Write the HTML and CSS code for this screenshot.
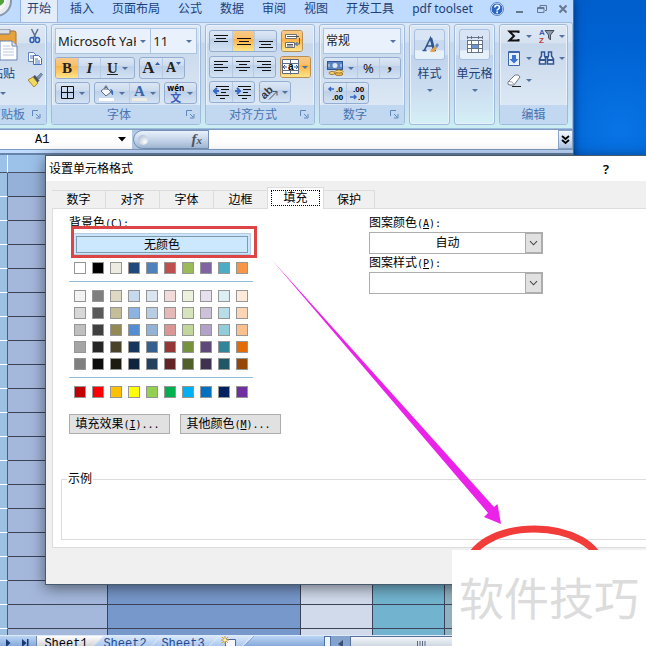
FILE: index.html
```html
<!DOCTYPE html>
<html lang="zh-CN">
<head>
<meta charset="utf-8">
<title>设置单元格格式</title>
<link rel="stylesheet" href="styles.css">
</head>
<body>
<main class="desktop">
  <section class="excel">
    <nav class="tabs">
      <svg class="orb" width="16" height="22" viewBox="0 0 16 22"><circle cx="-4" cy="1" r="15" fill="#e6ebf2" stroke="#8a97ab" stroke-width="2"/><circle cx="-4" cy="1" r="10" fill="#f7faf2"/><path d="M-4-2h8v4q-2 4-8 5z" fill="#4ea43a"/></svg>
      <a class="tab active" href="#home">开始</a>
      <a class="tab" href="#insert">插入</a>
      <a class="tab" href="#layout">页面布局</a>
      <a class="tab" href="#formula">公式</a>
      <a class="tab" href="#data">数据</a>
      <a class="tab" href="#review">审阅</a>
      <a class="tab" href="#view">视图</a>
      <a class="tab" href="#dev">开发工具</a>
      <a class="tab" href="#pdf">pdf toolset</a>
      <div class="winctl">
        <button aria-label="帮助"><svg width="14" height="14" viewBox="0 0 14 14"><circle cx="7" cy="7" r="6" fill="#2c66c4" stroke="#eaf3ff"/><circle cx="7" cy="7" r="6.500" fill="none" stroke="#5b83bd"/><path d="M4.800 5.500q0-2.300 2.300-2.300t2.300 2q0 1.200-1.200 1.900t-1.100 1.500" fill="none" stroke="#fff" stroke-width="1.600"/><path d="M6.300 9.600h1.700v1.600h-1.700z" fill="#fff"/></svg></button>
        <button aria-label="最小化"><svg width="10" height="10" viewBox="0 0 10 10"><path d="M1 8h7" stroke="#66788f" stroke-width="2"/></svg></button>
        <button aria-label="还原"><svg width="10" height="10" viewBox="0 0 10 10"><path d="M3 3V1.500h6.500v5H8M.500 3.500h6.500v5H.500zM.500 4.500h6.500" fill="none" stroke="#66788f"/></svg></button>
        <button aria-label="关闭"><svg width="10" height="10" viewBox="0 0 10 10"><path d="M1.500 1.500l7 7M8.500 1.500l-7 7" stroke="#66788f" stroke-width="2"/></svg></button>
      </div>
    </nav>

    <div class="ribbon">
      <section class="group clipboard">
        <div class="body cols">
          <button class="paste">
            <svg width="32" height="32" viewBox="0 0 32 32"><rect x="2" y="2" width="27" height="25" rx="2" fill="#e9a13c" stroke="#a8752a"/><rect x="8" y="0" width="15" height="5" rx="1" fill="#d9dde4" stroke="#6b7687"/><path d="M13 12h12l5 5v14H13z" fill="#fff" stroke="#6a83ad"/><path d="M16 17h7M16 20h11M16 23h11M16 26h11" stroke="#b4c6de"/><path d="M25 12v5h5" fill="#dce7f5" stroke="#6a83ad"/></svg>
            <span>粘贴</span><i class="arr"></i>
          </button>
          <div class="stack">
            <button aria-label="剪切"><svg width="16" height="16" viewBox="0 0 16 16"><path d="M4.500 1l4.500 9M11 1L6.500 10" stroke="#5a6e8c" stroke-width="1.500"/><ellipse cx="5" cy="12" rx="2" ry="2.500" fill="none" stroke="#2f5fb0" stroke-width="1.500"/><ellipse cx="10.500" cy="12" rx="2" ry="2.500" fill="none" stroke="#2f5fb0" stroke-width="1.500"/></svg></button>
            <button aria-label="复制"><svg width="16" height="16" viewBox="0 0 16 16"><path d="M1.500 2.500h5l3 3v6h-8z" fill="#fff" stroke="#5a86c8"/><path d="M3 6h4M3 8h4" stroke="#4a78bd"/><path d="M6.500 5.500h5l3 3v6h-8z" fill="#fff" stroke="#3f70ba"/><path d="M8 9h3M8 11h5M8 13h5" stroke="#4a78bd"/></svg></button>
            <button aria-label="格式刷"><svg width="16" height="16" viewBox="0 0 16 16"><path d="M1 8l5-3 5 6-4 4z" fill="#f0d861" stroke="#a58b2d"/><path d="M6 4.500l2-1.500 4.500 5.500-2 2z" fill="#4c5364"/><path d="M10 5l4-4 1.500 1.500L12 7z" fill="#7e93b5" stroke="#51617c" stroke-width=".6"/></svg></button>
          </div>
        </div>
        <footer><span>剪贴板</span><button class="launch" aria-label="剪贴板选项"><svg width="9" height="9" viewBox="0 0 9 9"><path d="M.500 6V.500H6M4 4l3 3M8 4v4H4" fill="none" stroke="#5f86b8"/></svg></button></footer>
      </section>

      <section class="group font">
        <div class="body">
          <div class="fields"><button class="combo face"><span>Microsoft YaHei</span><i class="arr"></i></button><button class="combo size"><span>11</span><i class="arr"></i></button></div>
          <div class="row">
            <div class="set"><button class="on w22 serif"><b>B</b></button><button class="w22 serif"><em>I</em></button><button class="w34 serif"><u>U</u><i class="arr"></i></button></div>
            <div class="set"><button class="w22 serif big">A<svg width="5" height="12" viewBox="0 0 5 12"><path d="M0 3l2.500-3L5 3z" fill="#315fa6"/></svg></button><button class="w22 serif small">A<svg width="5" height="12" viewBox="0 0 5 12"><path d="M0 0h5L2.500 3z" fill="#315fa6"/></svg></button></div>
          </div>
          <div class="row between">
            <div class="set"><button class="w34" aria-label="边框"><svg width="14" height="14" viewBox="0 0 14 14"><path d="M.500.500h12v12H.500zM6.500.500v12M.500 6.500h12" fill="none" stroke="#111"/></svg><i class="arr"></i></button></div>
            <div class="set"><button class="w34" aria-label="填充颜色"><svg width="16" height="16" viewBox="0 0 16 16"><path d="M2 6l5-4 5 5-5 4z" fill="#f5f7fa" stroke="#59677d"/><path d="M6 5V1.500q1-1.500 2 0V5" fill="none" stroke="#59677d"/><path d="M11 4q4 0 3 6-2 0-2-4z" fill="#336cc0"/><path d="M0 13h15v3H0z" fill="#fff"/></svg><i class="arr"></i></button><button class="w30 serif fontcolor"><svg width="15" height="16" viewBox="0 0 15 16"><text x="2" y="11" font-size="15" font-weight="700" font-family="Liberation Serif" fill="#3965a8">A</text><path d="M0 13h15v3H0z" fill="#eeece1"/></svg><i class="arr"></i></button></div>
            <div class="set"><button class="w32" aria-label="拼音"><span class="wen"><span>wén</span><span>文</span></span><i class="arr"></i></button></div>
          </div>
        </div>
        <footer><span>字体</span><button class="launch" aria-label="字体选项"><svg width="9" height="9" viewBox="0 0 9 9"><path d="M.500 6V.500H6M4 4l3 3M8 4v4H4" fill="none" stroke="#5f86b8"/></svg></button></footer>
      </section>

      <section class="group align">
        <div class="body">
          <div class="row first">
            <div class="set"><button class="w22" aria-label="顶端对齐"><svg width="16" height="16" viewBox="0 0 16 16"><path d="M1 2.500h14M3 5.500h10M1 8.500h14" stroke="#111"/></svg></button><button class="on w22" aria-label="垂直居中"><svg width="16" height="16" viewBox="0 0 16 16"><path d="M1 5.500h14M3 8.500h10M1 11.500h14" stroke="#111"/></svg></button><button class="w22" aria-label="底端对齐"><svg width="16" height="16" viewBox="0 0 16 16"><path d="M1 8.500h14M3 11.500h10M1 14.500h14" stroke="#111"/></svg></button></div>
            <div class="set lit"><button class="on w20" aria-label="自动换行"><svg width="17" height="17" viewBox="0 0 17 17"><path d="M1.500 1.500h11v4h-11zM1.500 9.500h9v5h-9z" fill="#fff" stroke="#6c7178"/><path d="M3 3.500h12M3 11.500h6M3 13h6" stroke="#555"/><path d="M15.500 5v6h-4m2-2l-2 2 2 2" fill="none" stroke="#315fa6"/></svg></button></div>
          </div>
          <div class="row">
            <div class="set"><button class="w22" aria-label="左对齐"><svg width="16" height="16" viewBox="0 0 16 16"><path d="M1 2.500h14M1 5.500h9M1 8.500h14M1 11.500h9" stroke="#111"/></svg></button><button class="w22" aria-label="居中"><svg width="16" height="16" viewBox="0 0 16 16"><path d="M1 2.500h14M4 5.500h8M1 8.500h14M4 11.500h8" stroke="#111"/></svg></button><button class="w22" aria-label="右对齐"><svg width="16" height="16" viewBox="0 0 16 16"><path d="M1 2.500h14M6 5.500h9M1 8.500h14M6 11.500h9" stroke="#111"/></svg></button></div>
            <div class="set lit"><button class="on w30" aria-label="合并后居中"><svg width="17" height="16" viewBox="0 0 17 16"><path d="M.500.500h16v14H.500zM.500 4.500h16M.500 11.500h16M8.500.500v4M8.500 11.500v4" fill="#fff" stroke="#5c6b80"/><path d="M1 8h4m-2-2L1 8l2 2M16 8h-4m2-2l2 2-2 2" fill="none" stroke="#335b9c"/><text x="6" y="11" font-size="10" font-weight="700" font-family="Liberation Sans">a</text></svg><i class="arr"></i></button></div>
          </div>
          <div class="row">
            <div class="set"><button class="w22" aria-label="减少缩进"><svg width="17" height="16" viewBox="0 0 17 16"><path d="M3 2.500h13M8 5.500h8M8 8.500h5M3 11.500h13M7 14.500h5" stroke="#111"/><path d="M6 7H1m3-3L1 7l3 3" fill="none" stroke="#3968c6" stroke-width="2"/></svg></button><button class="w22" aria-label="增加缩进"><svg width="17" height="16" viewBox="0 0 17 16"><path d="M3 2.500h13M8 5.500h8M8 8.500h5M3 11.500h13M7 14.500h5" stroke="#111"/><path d="M0 7h5M2 4l3 3-3 3" fill="none" stroke="#3968c6" stroke-width="2"/></svg></button></div>
            <div class="set"><button class="w30" aria-label="方向"><svg width="17" height="16" viewBox="0 0 17 16"><text x="-1" y="13" transform="rotate(-45 4 10)" font-size="11" font-weight="700" font-family="Liberation Sans" fill="#333">ab</text><path d="M7 15.500l8-8m-4 0h4v4" fill="none" stroke="#555"/></svg><i class="arr"></i></button></div>
          </div>
        </div>
        <footer><span>对齐方式</span><button class="launch" aria-label="对齐选项"><svg width="9" height="9" viewBox="0 0 9 9"><path d="M.500 6V.500H6M4 4l3 3M8 4v4H4" fill="none" stroke="#5f86b8"/></svg></button></footer>
      </section>

      <section class="group number">
        <div class="body">
          <div class="fields"><button class="combo format"><span>常规</span><i class="arr"></i></button></div>
          <div class="row">
            <div class="set"><button class="w34" aria-label="会计格式"><svg width="17" height="16" viewBox="0 0 17 16"><rect x=".5" y="1.500" width="15" height="8" fill="#5c84c0" stroke="#2e5592"/><circle cx="8" cy="5.500" r="2.500" fill="#dbe7f6"/><path d="M2 4v3M14 4v3" stroke="#dbe7f6"/><ellipse cx="12" cy="14" rx="4" ry="1.500" fill="#f2c14c" stroke="#a9782a"/><ellipse cx="12" cy="11.500" rx="4" ry="1.500" fill="#f8d878" stroke="#a9782a"/><ellipse cx="5" cy="13" rx="3" ry="1.500" fill="#f8d878" stroke="#a9782a"/></svg><i class="arr"></i></button><button class="w22 pct">%</button><button class="w22 serif comma"><b>,</b></button></div>
          </div>
          <div class="row">
            <div class="set"><button class="w22" aria-label="增加小数位"><svg width="17" height="16" viewBox="0 0 17 16"><text x="9" y="7" font-size="8" font-weight="700" font-family="Liberation Sans">.0</text><text x="5" y="15" font-size="8" font-weight="700" font-family="Liberation Sans">.00</text><path d="M7 4H2m2-2L2 4l2 2" fill="none" stroke="#3968c6" stroke-width="1.500"/></svg></button><button class="w22" aria-label="减少小数位"><svg width="17" height="16" viewBox="0 0 17 16"><text x="4" y="7" font-size="8" font-weight="700" font-family="Liberation Sans">.00</text><text x="9" y="15" font-size="8" font-weight="700" font-family="Liberation Sans">.0</text><path d="M1 12h6m-2-2l2 2-2 2" fill="none" stroke="#3968c6" stroke-width="1.500"/></svg></button></div>
          </div>
        </div>
        <footer><span>数字</span><button class="launch" aria-label="数字选项"><svg width="9" height="9" viewBox="0 0 9 9"><path d="M.500 6V.500H6M4 4l3 3M8 4v4H4" fill="none" stroke="#5f86b8"/></svg></button></footer>
      </section>

      <section class="group tall">
        <button class="popup"><span class="tile"><svg width="18" height="18" viewBox="0 0 18 18"><path d="M1.500 14.500h4M3.500 14L9.500 2l3 12M5 10h7M10 14.500h5" fill="none" stroke="#2f568f" stroke-width="1.600"/><path d="M10 2l3 12" stroke="#2f568f" stroke-width="2.500"/><path d="M10 14l4-4 2 2-3 4H9z" fill="#e7a145"/><path d="M14 10l2-3 2 2-2 3z" fill="#6488bf"/></svg></span><span>样式</span><i class="arr"></i></button>
      </section>
      <section class="group tall">
        <button class="popup"><span class="tile"><svg width="18" height="18" viewBox="0 0 18 18"><path d="M1.500 4.500h15v12h-15z" fill="#fff"/><path d="M1.500 4v13M5.500 4v13M12.500 4v13M16.500 4v13M1 4.500h16M1 8.500h16M1 12.500h16M1 16.500h16" stroke="#66748a"/><path d="M6 9h6v3H6z" fill="#6c95d6"/><path d="M1.500 0v3M5.500 0v3M12.500 0v3M16.500 0v3M2 1.500h14" stroke="#66748a"/></svg></span><span>单元格</span><i class="arr"></i></button>
      </section>

      <section class="group edit">
        <div class="body tools">
          <button aria-label="求和"><svg width="16" height="16" viewBox="0 0 16 16"><path d="M12.500 5V3.500h-9L8 8l-4.500 4.500h9V11" fill="none" stroke="#111" stroke-width="2"/></svg><i class="arr"></i></button>
          <button aria-label="排序和筛选"><svg width="17" height="16" viewBox="0 0 17 16"><text x="1" y="7" font-size="8" font-weight="700" font-family="Liberation Sans" fill="#2e5fb3">A</text><text x="1" y="15" font-size="8" font-weight="700" font-family="Liberation Sans" fill="#bd3f38">Z</text><path d="M7 2.500h9l-3.500 4.500v5l-2-2V7z" fill="#8f98a6" stroke="#444f5f"/></svg><i class="arr"></i></button>
          <button aria-label="填充"><svg width="16" height="16" viewBox="0 0 16 16"><path d="M2.500 1.500h11v14h-11z" fill="#e8f1fd" stroke="#3c66ab"/><path d="M3 2.500h10" stroke="#3c66ab"/><path d="M6 5h4v4h2.500L8 13.500 3.500 9H6z" fill="#3a74d6"/></svg><i class="arr"></i></button>
          <button aria-label="查找和选择"><svg width="17" height="16" viewBox="0 0 17 16"><path d="M3.500 2h3v4l1 2v6h-6V9l2-3zM10.500 2h3v4l2 3v5h-6V8l1-2z" fill="#dce8fa" stroke="#315691" stroke-width="1.500"/><path d="M2 10h5M10 10h5M7 7h3" stroke="#315691" stroke-width="2"/></svg><i class="arr"></i></button>
          <button aria-label="清除"><svg width="16" height="16" viewBox="0 0 16 16"><path d="M2 10l7-7q4-1 5 2l-6 8H4q-3 0-2-3z" fill="#fff" stroke="#747b86"/><path d="M3 9.500q4-.500 5 3" fill="none" stroke="#9aa2ae"/><path d="M6 14.500h9" stroke="#222"/></svg><i class="arr"></i></button>
        </div>
        <footer><span>编辑</span></footer>
      </section>
    </div>

    <div class="formula">
      <button class="name"><span>A1</span><svg width="8" height="5" viewBox="0 0 8 5"><path d="M0 0h8L4 4.500z"/></svg></button>
      <div class="capsule"><i class="knob"></i><span>f<small>x</small></span></div>
      <input class="fx" type="text" aria-label="编辑栏">
      <button class="expand" aria-label="展开编辑栏"><svg width="9" height="10" viewBox="0 0 9 10"><path d="M1 1l3.500 3L8 1M1 5l3.500 3L8 5" fill="none" stroke="#000" stroke-width="1.800"/></svg></button>
    </div>

    <div class="sheet">
      <table>
        <colgroup><col class="c0"><col class="c1"><col class="c2"><col class="c3"><col class="c4"><col></colgroup>
        <thead><tr><th></th><th></th><th></th><th></th><th></th><th></th></tr></thead>
        <tbody>
          <tr><th></th><td></td><td></td><td></td><td></td><td></td></tr>
          <tr><th></th><td></td><td></td><td></td><td></td><td></td></tr>
          <tr><th></th><td></td><td></td><td></td><td></td><td></td></tr>
          <tr><th></th><td></td><td></td><td></td><td></td><td></td></tr>
          <tr><th></th><td></td><td></td><td></td><td></td><td></td></tr>
          <tr><th></th><td></td><td></td><td></td><td></td><td></td></tr>
          <tr><th></th><td></td><td></td><td></td><td></td><td></td></tr>
          <tr><th></th><td></td><td></td><td></td><td></td><td></td></tr>
          <tr><th></th><td></td><td></td><td></td><td></td><td></td></tr>
          <tr><th></th><td></td><td></td><td></td><td></td><td></td></tr>
          <tr><th></th><td></td><td></td><td></td><td></td><td></td></tr>
          <tr><th></th><td></td><td></td><td></td><td></td><td></td></tr>
          <tr><th></th><td></td><td></td><td></td><td></td><td></td></tr>
          <tr><th></th><td></td><td></td><td></td><td></td><td></td></tr>
          <tr><th></th><td></td><td></td><td></td><td></td><td></td></tr>
          <tr><th></th><td></td><td></td><td></td><td></td><td></td></tr>
          <tr><th></th><td></td><td></td><td></td><td></td><td></td></tr>
          <tr><th></th><td></td><td></td><td></td><td></td><td></td></tr>
          <tr><th></th><td></td><td></td><td></td><td></td><td></td></tr>
          <tr><th></th><td></td><td></td><td></td><td></td><td></td></tr>
        </tbody>
      </table>
    </div>

    <div class="bottom">
      <div class="pager"><button aria-label="下一张"><svg width="5" height="8" viewBox="0 0 5 8"><path d="M0 0l4.500 4L0 8z" fill="#173a75"/></svg></button><button aria-label="最后一张"><svg width="7" height="8" viewBox="0 0 7 8"><path d="M0 0l4.500 4L0 8zM5 0h1.500v8H5z" fill="#173a75"/></svg></button></div>
      <div class="sheets"><button class="current">Sheet1</button><button>Sheet2</button><button>Sheet3</button><button class="new" aria-label="插入工作表"><svg width="16" height="14" viewBox="0 0 16 14"><path d="M4.500 3.500h10v10h-10z" fill="#f5f9ff" stroke="#4c6899"/><path d="M4 0v8M0 4h8M1 1l6 6M7 1L1 7" stroke="#d99a2b"/><circle cx="4" cy="4" r="1.500" fill="#fff3b0"/></svg></button></div>
      <div class="scroll"><i class="split"></i><button class="left" aria-label="向左滚动"><svg width="5" height="8" viewBox="0 0 5 8"><path d="M5 0L0 4l5 4z" fill="#3a4f73"/></svg></button><div class="thumb"><svg width="9" height="6" viewBox="0 0 9 6"><path d="M.500 0v6M3 0v6M5.500 0v6M8 0v6" stroke="#5b6a80"/></svg></div></div>
    </div>
  </section>

  <section class="dialog" role="dialog" aria-label="设置单元格格式">
    <header><h1>设置单元格格式</h1><button aria-label="帮助">?</button></header>
    <div class="dtabs" role="tablist">
      <button role="tab">数字</button><button role="tab">对齐</button><button role="tab">字体</button><button role="tab">边框</button><button role="tab" class="sel" aria-selected="true"><span>填充</span></button><button role="tab">保护</button>
    </div>
    <div class="page">
      <div class="split-cols">
        <div class="colors">
          <div class="lab">背景色<span class="key">(<u>C</u>):</span></div>
          <button class="none"><span>无颜色</span></button>
          <div class="swatches" id="theme"></div>
          <hr>
          <div class="swatches" id="tints"></div>
          <hr>
          <div class="swatches" id="standard"></div>
          <div class="more"><button>填充效果<span class="key">(<u>I</u>)...</span></button><button>其他颜色<span class="key">(<u>M</u>)...</span></button></div>
        </div>
        <div class="pattern">
          <label class="lab" for="pc">图案颜色<span class="key">(<u>A</u>):</span></label>
          <div class="drop"><select id="pc"><option>自动</option></select><svg width="17" height="19" viewBox="0 0 17 19"><path d="M4.500 7.500l4 4 4-4" fill="none" stroke="#444" stroke-width="1.200"/></svg></div>
          <label class="lab" for="ps">图案样式<span class="key">(<u>P</u>):</span></label>
          <div class="drop"><select id="ps"><option></option></select><svg width="17" height="19" viewBox="0 0 17 19"><path d="M4.500 7.500l4 4 4-4" fill="none" stroke="#444" stroke-width="1.200"/></svg></div>
        </div>
      </div>
      <fieldset><legend>示例</legend></fieldset>
    </div>
  </section>

  <svg class="marks" width="646" height="646" viewBox="0 0 646 646">
    <rect x="72.500" y="227.500" width="183" height="29" fill="none" stroke="#dc4545" stroke-width="3"/>
    <path d="M272 260L494 507l3.500-3L501 524l-17-7 4-4z" fill="#ea22ea"/>
    <ellipse cx="534.500" cy="567" rx="66" ry="38" fill="none" stroke="#f23c3a" stroke-width="7"/>
  </svg>
  <div class="watermark">软件技巧</div>
</main>
<script src="swatches.js"></script>
</body>
</html>
```
FILE: styles.css
```css
* { box-sizing: border-box; }
body { margin: 0; font: 12px/16px "Noto Sans", "Noto Sans CJK SC", sans-serif; color: #000; }
button { font: inherit; color: inherit; margin: 0; padding: 0; border: 0; background: none; display: flex; align-items: center; justify-content: center; }
svg { flex: none; display: block; }
a { color: inherit; text-decoration: none; }

.desktop { position: relative; height: 100vh; overflow: hidden; background: radial-gradient(circle at 620px 130px, #0874e6, #0062d2 90px, #0058c0 200px); }
.excel { width: 574px; height: 100%; display: flex; flex-direction: column; background: #bfdbff; border-right: 1px solid #4a6f9f; box-shadow: 0 0 8px #003070; }

.tabs { display: flex; align-items: stretch; height: 22px; color: #1e4179; line-height: 18px; padding-right: 4px; }
.orb { margin-right: 4px; }
.tab { padding: 0 9px; white-space: nowrap; }
.tab.active { padding: 0 6px; margin-right: 3px; background: #e3edfa; border: solid #95b5e0; border-width: 0 1px; }
.winctl { flex: 1; display: flex; justify-content: space-between; align-items: flex-start; padding: 2px 1px 0 8px; }
.winctl button { height: 14px; }

.ribbon { display: flex; gap: 4px; height: 107px; padding: 1px 4px 4px 0; border: 1px solid #9dbce0; border-left: 0; border-radius: 0 3px 0 0; background: linear-gradient(#dce8f6, #d2e1f3 18%, #c5d8ee 19%, #c9dcef 70%, #cbeef3); }
.group { display: flex; flex-direction: column; flex: none; height: 101px; border: 1px solid #9fbbdc; border-radius: 3px; box-shadow: inset 0 0 0 1px #e9f2fb; background: linear-gradient(#dfe8f4, #d6e2f1 18%, #c8d8eb 19%, #dbe7f4 80%); overflow: hidden; }
.body { flex: 1; padding: 3px 3px 0; }
.group footer { display: flex; align-items: center; height: 19px; padding: 0 3px; background: #c1d8f0; color: #4874b2; }
.group footer span { flex: 1; text-align: center; }
.launch { width: 14px; }
.clipboard { width: 66px; margin-left: -19px; }
.font { width: 150px; }
.align { width: 110px; }
.number { width: 86px; }
.tall { width: 41px; background: linear-gradient(#dbe7f5, #d0dff1 30%, #c0d3ec 31%, #cde0f1 70%, #d5f0f6); }
.edit { width: 69px; }

.cols { display: flex; gap: 6px; }
.paste { width: 38px; flex-direction: column; justify-content: flex-start; color: #1e4179; gap: 5px; padding-top: 1px; }
.paste .arr { margin: 5px 0 0; }
.stack { display: flex; flex-direction: column; gap: 6px; }
.arr { flex: none; border: 3px solid transparent; border-top-color: #53729f; border-bottom: 0; margin-left: 4px; }
.fields { display: flex; height: 26px; }
.combo { justify-content: space-between; background: #e9f2fc; border: 1px solid #abc4e2; color: #222; padding: 0 4px 0 2px; overflow: hidden; white-space: nowrap; }
.combo span { overflow: hidden; }
.face { width: 97px; font-size: 13px; }
.size { width: 46px; font-size: 13px; border-left: 0; }
.format { width: 80px; }
.row { display: flex; gap: 4px; margin-top: 3px; }
.row.first { margin-top: 0; padding: 2px 0 1px; }
.row.between { justify-content: space-between; }
.set { display: flex; height: 22px; border: 1px solid #94aed2; border-radius: 3px; background: linear-gradient(#dce7f5, #cbdaed 40%, #bdd0e8 41%, #d3e2f3); overflow: hidden; }
.set.lit { border-color: #b98f52; }
.set button + button { border-left: 1px solid #b7cae3; }
.set .on { background: linear-gradient(#f7c98a, #fbc067 40%, #fdb145 41%, #ffe58a); }
.w20 { width: 20px; }
.w22 { width: 22px; }
.w30 { width: 30px; }
.w32 { width: 32px; }
.w34 { width: 34px; }
.w30 .arr, .w32 .arr { margin-left: 3px; }
.serif { font-family: "Liberation Serif", serif; font-size: 15px; color: #222; }
.serif em { font-weight: 700; }
.serif u { font-weight: 700; }
.serif.big { font-size: 17px; font-weight: 700; }
.serif.small { font-size: 14px; font-weight: 700; }
.comma { font-size: 18px; padding-bottom: 8px; }
.pct { font-size: 13px; color: #222; }
.wen { display: flex; flex-direction: column; align-items: center; font: 700 8px/9px "Noto Sans", sans-serif; }
.wen span + span { font: 700 11px/11px "Noto Sans CJK SC", sans-serif; color: #3d5ec0; }
.popup { height: 100%; flex-direction: column; justify-content: flex-start; padding-top: 4px; color: #1e4179; }
.tile { display: flex; align-items: center; justify-content: center; width: 31px; height: 31px; border: 1px solid #a6c0df; border-radius: 3px; margin-bottom: 6px; background: linear-gradient(#d9e5f4 35%, #c9daef 36%, #c9daef 70%, #e7f1fa 71%); }
.popup .arr { margin: 7px 0 0; }
.tools { display: grid; grid-template-columns: 28px 30px; align-content: start; gap: 6px 3px; padding-left: 5px; }

.formula { display: flex; height: 21px; margin: 0 0 3px; border: solid #7f9dc0; border-width: 1px 0; background: #b4cbe6; flex: none; }
.name { width: 132px; background: #fff; justify-content: space-between; padding: 0 6px 0 35px; font: 12px "Liberation Mono", monospace; }
.capsule { flex: none; width: 76px; margin-left: 1px; display: flex; align-items: center; justify-content: space-between; padding: 0 6px 0 4px; border: 1px solid #7591b8; border-radius: 10px 0 0 10px; background: linear-gradient(#e9f1fb, #a5bcd9); font: italic 700 15px/16px "Liberation Serif", serif; color: #4d5766; }
.capsule small { font-size: 11px; }
.knob { width: 10px; height: 10px; border-radius: 5px; background: radial-gradient(circle at 7px 7px, #fff, #9fb0c8); }
.fx { flex: 1; min-width: 0; border: 0; padding: 0; background: #fff; outline: 0; }
.expand { width: 15px; border: 1px solid #8ba6ca; background: linear-gradient(#f3f8fe, #b4cae6); }

.sheet { flex: 1; min-height: 0; overflow: hidden; border-top: 2px solid #6883a8; }
table { width: 100%; table-layout: fixed; border-collapse: separate; border-spacing: 0; }
.c0 { width: 8px; }
.c1 { width: 100px; }
.c2 { width: 193px; }
.c3, .c4 { width: 72px; }
th, td { padding: 0; height: 24px; border: solid #3c4358; border-width: 0 1px 1px 0; }
thead th { height: 18px; background: #9cc2ea; border-color: #4a5368; border-right-color: #fff; }
tbody th { background: #9dc1e2; border-bottom-color: #fff; border-right-color: #5f5a55; }
td:nth-child(2) { background: #a4b8dc; }
td:nth-child(3) { background: #7798cb; }
td:nth-child(4) { background: #d0daeb; }
td:nth-child(5) { background: #72b4cf; }
td:nth-child(6) { background: #90b2c0; }
tbody tr:first-child td:nth-child(2) { background: #95b1d9; }

.bottom { display: flex; flex: none; height: 11px; overflow: hidden; align-items: flex-start; background: linear-gradient(#bcd5f5, #86aada); border-top: 1px solid #dceafa; }
.pager { display: flex; gap: 11px; width: 36px; padding: 3px 7px; justify-content: flex-end; }
.sheets { display: flex; flex: none; width: 220px; overflow: hidden; border-left: 1px solid #6f86a8; font: 12px/16px "Liberation Mono", monospace; color: #1f4a92; }
.sheets button { position: relative; z-index: 0; width: 58px; height: 16px; padding-right: 6px; }
.sheets button::before { content: ""; position: absolute; z-index: -1; inset: 0; height: 10px; background: linear-gradient(#d9e8fb, #aac8ee); border-right: 1px solid #fff; box-shadow: 1px 0 #6f8fbd; transform: skewX(-45deg); }
.sheets .current { width: 62px; color: #000; padding-right: 4px; }
.sheets .current::before { left: -12px; background: linear-gradient(#fff, #d4d4d4); }
.sheets .new { width: 33px; align-items: flex-start; }
.scroll { flex: 1; display: flex; padding-left: 68px; }
.split { width: 7px; height: 14px; border: 1px solid #4f719f; background: #eef5ff; }
.left { width: 19px; height: 16px; background: #83a2ce; }
.thumb { flex: 1; display: flex; justify-content: center; height: 16px; padding: 4px 80px 0 0; background: linear-gradient(#f4f6f9, #bac6d7); border: 1px solid #556f98; }

.dialog { position: absolute; left: 45px; right: -60px; top: 155px; display: flex; flex-direction: column; padding-bottom: 36px; background: #f0f0f0; border: 1px solid #465b6d; box-shadow: 0 3px 14px rgba(0, 0, 0, .5); }
.dialog header { display: flex; align-items: center; justify-content: space-between; height: 25px; padding: 0 96px 0 3px; background: #fff; }
h1 { margin: 0; font-size: 12px; font-weight: 400; }
.dialog header button { font-size: 13px; font-weight: 600; }
.dtabs { display: flex; align-items: flex-end; margin: 6px 0 -1px 6px; position: relative; }
.dtabs button { width: 54px; height: 19px; border: solid #dcdcdc; border-width: 1px 1px 0 0; }
.dtabs button:last-child { width: 51px; }
.dtabs .sel { width: 57px; height: 22px; margin-left: -1px; background: #fff; border-left-width: 1px; align-items: flex-start; padding-top: 2px; }
.sel span { border: 1px dotted #000; padding: 0 11px; line-height: 14px; }
.page { margin-left: 6px; padding: 6px 0 7px 8px; background: #fff; border: 1px solid #dcdcdc; }
.split-cols { display: flex; gap: 88px; padding-left: 8px; }
.colors { width: 212px; }
.lab { display: block; height: 16px; line-height: 16px; white-space: nowrap; }
.key { font: 10px "DejaVu Sans Mono", monospace; }
.none { width: 178px; height: 22px; margin: 2px 0 7px 4px; padding: 2px; background: #cce4fb; border: 1px solid #b5cfe2; }
.none span { flex: 1; height: 17px; line-height: 15px; border: 1px solid #7e9bb0; background: #cce8ff; }
.swatches { display: grid; grid-template-columns: repeat(10, 12px); gap: 5px 6px; padding-left: 5px; }
.swatches i { height: 12px; border: 1px solid #969696; }
.colors hr { width: 184px; height: 1px; margin: 7px 0 8px; border: 0; background: #93bcd8; }
.more { display: flex; gap: 10px; margin-top: 16px; }
.more button { width: 101px; height: 20px; padding-right: 4px; border: 1px solid #adadad; background: #e1e1e1; white-space: nowrap; }
.pattern { width: 174px; }
.drop { display: flex; height: 22px; border: 1px solid #adadad; margin: 1px 0; background: #fff; }
.drop select { flex: 1; min-width: 0; appearance: none; border: 0; background: #fff; font: inherit; color: inherit; padding: 0; text-align-last: center; }
.drop svg { height: 20px; border: 1px solid #adadad; background: #e1e1e1; }
fieldset { height: 69px; margin: 37px 0 0; padding: 0 5px; border: 1px solid #dcdcdc; border-right: 0; }
legend { padding: 0 1px; }

.marks { position: absolute; left: 0; top: 0; }
.watermark { position: absolute; left: 452px; right: 0; top: 550px; bottom: 0; padding-left: 7px; background: #fff; color: #dcdcdc; font: 400 45px/94px "Noto Sans CJK SC", sans-serif; white-space: nowrap; }
```
FILE: swatches.js
```js
const palettes = {
  theme: ["#ffffff #000000 #eeece1 #1f497d #4f81bd #c0504d #9bbb59 #8064a2 #4bacc6 #f79646"],
  tints: [
    "#f2f2f2 #7f7f7f #ddd9c3 #c6d9f0 #dbe5f1 #f2dcdb #ebf1dd #e5e0ec #dbeef3 #fdeada",
    "#d8d8d8 #595959 #c4bd97 #8db3e2 #b8cce4 #e5b9b7 #d7e3bc #ccc1d9 #b7dde8 #fbd5b5",
    "#bfbfbf #3f3f3f #938953 #548dd4 #95b3d7 #d99694 #c3d69b #b2a2c7 #92cddc #fac08f",
    "#a5a5a5 #262626 #494429 #17365d #366092 #953734 #76923c #5f497a #31859b #e36c09",
    "#7f7f7f #0c0c0c #1d1b10 #0f243e #244061 #632423 #4f6128 #3f3151 #205867 #974806"
  ],
  standard: ["#c00000 #ff0000 #ffc000 #ffff00 #92d050 #00b050 #00b0f0 #0070c0 #002060 #7030a0"]
};
for (const [id, rows] of Object.entries(palettes)) {
  const grid = document.getElementById(id);
  for (const color of rows.join(" ").split(" ")) {
    const cell = document.createElement("i");
    cell.style.background = color;
    grid.append(cell);
  }
}
```
